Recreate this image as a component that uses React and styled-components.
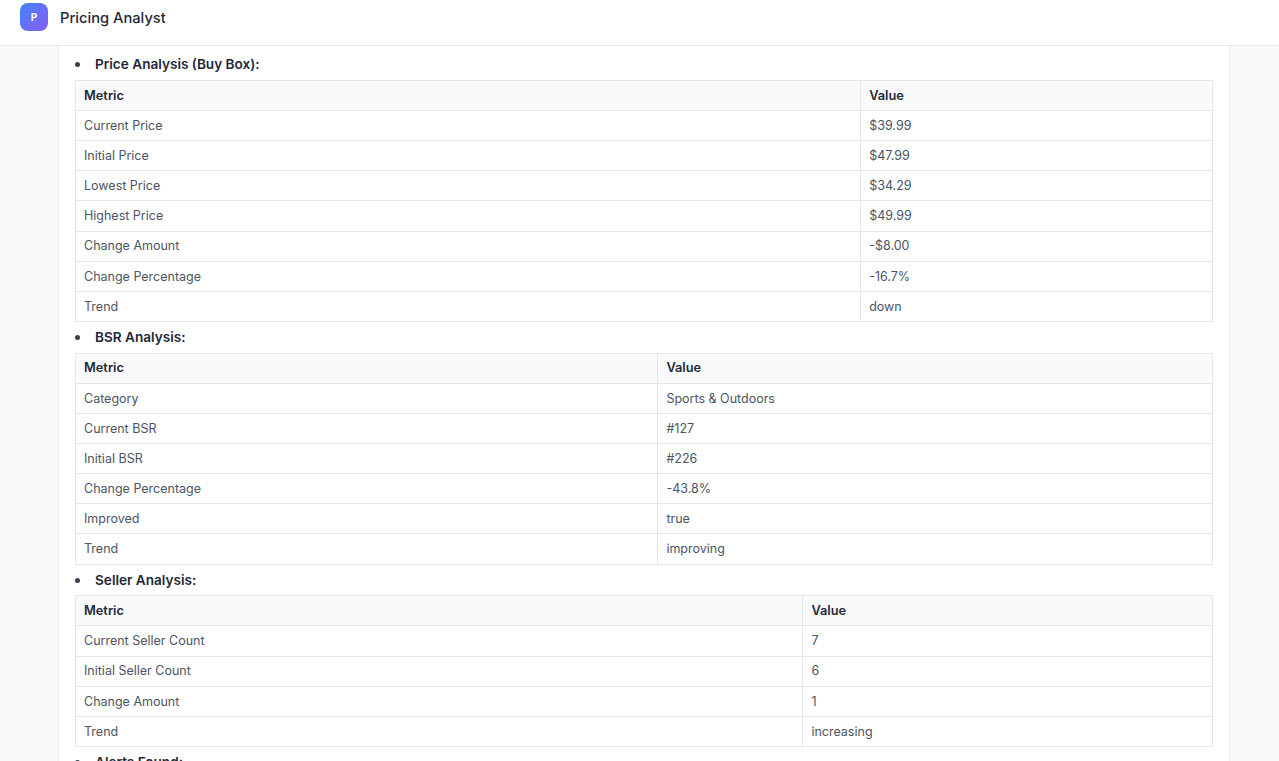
import React from "react";
import styled, { createGlobalStyle } from "styled-components";

const Global = createGlobalStyle`
  html, body { margin: 0; padding: 0; height: 100%; overflow: hidden; }
  body { font-family: Inter, "Noto Sans", sans-serif; background: #f8fafc; color: #111827; }
`;
const Page = styled.div`
  height: 761px; display: flex; flex-direction: column; overflow: hidden;
  background: #f9fafc;
`;
const Header = styled.header`
  flex: 0 0 46px; box-sizing: border-box; display: flex; align-items: flex-start;
  padding: 3px 20px 0; background: #fff; border-bottom: 1px solid #e8eaee;
`;
const HeaderInner = styled.div`
  display: flex; align-items: center; gap: 12px;
`;
const Logo = styled.div`
  width: 28px; height: 28px; border-radius: 8px; display: flex; align-items: center; justify-content: center;
  background: linear-gradient(135deg, #3f83f8, #8b5cf6); color: #fff; font-size: 10px; font-weight: 700;
`;
const Title = styled.div`
  font-size: 14.7px; font-weight: 500; color: #1f2937; padding-top: 1px;
`;
const Main = styled.main`
  flex: 1; min-height: 0; overflow: hidden; padding: 0 49px 0 58px;
`;
const Card = styled.div`
  background: #fff; border: 1px solid #e8eaee; border-top: 0;
  padding: 8.3px 16px 0; min-height: 800px;
`;
const List = styled.ul`
  margin: 0; padding: 0; list-style: none;
`;
const Item = styled.li`
  position: relative; padding-left: 20px;
  font-size: 13.6px; font-weight: 600; line-height: 20px; color: #1f2937;
  height: 20px; margin-bottom: 5.5px;
  &::before {
    content: ""; position: absolute; left: 0; top: 8px; width: 5px; height: 5px;
    border-radius: 50%; background: #374151;
  }
`;
const TableSlot = styled.li`
  display: block;
`;
const Table = styled.table`
  width: 1138px; border-collapse: collapse; table-layout: fixed; margin: 0 0 5.2px;
  font-size: 12.5px; color: #4b5563;
`;
const Row = styled.tr`
  height: 30.15px;
`;
const Head = styled.th`
  box-sizing: border-box; background: #f9fafb; border: 1px solid #e5e7eb; padding: 0 8px 0.4px; text-align: left;
  font-size: 12.8px; font-weight: 600; color: #1f2937; width: ${(p) => p.$w || "auto"};
`;
const Cell = styled.td`
  box-sizing: border-box; border: 1px solid #e5e7eb; padding: 0 8px 0.4px;
`;

const sections = [
  { title: "Price Analysis (Buy Box):", w: "785.2px", rows: [["Current Price", "$39.99"], ["Initial Price", "$47.99"], ["Lowest Price", "$34.29"], ["Highest Price", "$49.99"], ["Change Amount", "-$8.00"], ["Change Percentage", "-16.7%"], ["Trend", "down"]] },
  { title: "BSR Analysis:", w: "582.4px", rows: [["Category", "Sports & Outdoors"], ["Current BSR", "#127"], ["Initial BSR", "#226"], ["Change Percentage", "-43.8%"], ["Improved", "true"], ["Trend", "improving"]] },
  { title: "Seller Analysis:", w: "727.4px", rows: [["Current Seller Count", "7"], ["Initial Seller Count", "6"], ["Change Amount", "1"], ["Trend", "increasing"]] },
];

export default function App() {
  return (
    <Page>
      <Global />
      <Header>
        <HeaderInner>
          <Logo>P</Logo>
          <Title>Pricing Analyst</Title>
        </HeaderInner>
      </Header>
      <Main>
        <Card>
          <List>
            {sections.map((s) => (
              <React.Fragment key={s.title}>
                <Item>{s.title}</Item>
                <TableSlot>
                  <Table>
                    <thead>
                      <Row><Head $w={s.w}>Metric</Head><Head>Value</Head></Row>
                    </thead>
                    <tbody>
                      {s.rows.map((r) => (
                        <Row key={r[0]}><Cell>{r[0]}</Cell><Cell>{r[1]}</Cell></Row>
                      ))}
                    </tbody>
                  </Table>
                </TableSlot>
              </React.Fragment>
            ))}
            <Item>Alerts Found:</Item>
          </List>
        </Card>
      </Main>
    </Page>
  );
}
